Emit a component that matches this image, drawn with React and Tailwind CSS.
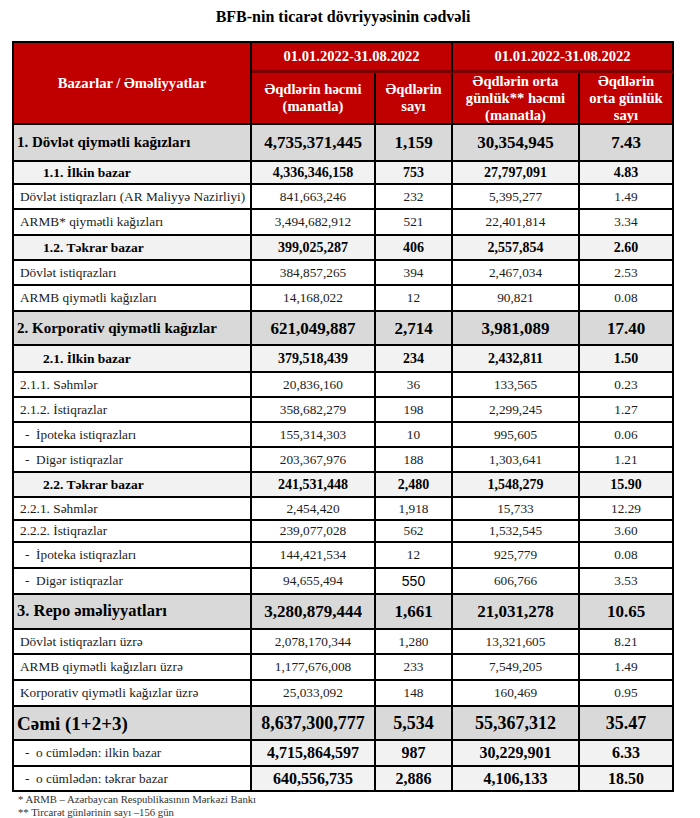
import React from "react";

const rows = [
  { t: "sec", l: "1. Dövlət qiymətli kağızları", v: ["4,735,371,445", "1,159", "30,354,945", "7.43"] },
  { t: "sub", l: "1.1. İlkin bazar", v: ["4,336,346,158", "753", "27,797,091", "4.83"] },
  { t: "reg", l: "Dövlət istiqrazları (AR Maliyyə Nazirliyi)", v: ["841,663,246", "232", "5,395,277", "1.49"] },
  { t: "reg", l: "ARMB* qiymətli kağızları", v: ["3,494,682,912", "521", "22,401,814", "3.34"] },
  { t: "sub", l: "1.2. Təkrar bazar", v: ["399,025,287", "406", "2,557,854", "2.60"] },
  { t: "reg", l: "Dövlət istiqrazları", v: ["384,857,265", "394", "2,467,034", "2.53"] },
  { t: "reg", l: "ARMB qiymətli kağızları", v: ["14,168,022", "12", "90,821", "0.08"] },
  { t: "sec", l: "2. Korporativ qiymətli kağızlar", v: ["621,049,887", "2,714", "3,981,089", "17.40"] },
  { t: "sub", l: "2.1. İlkin bazar", v: ["379,518,439", "234", "2,432,811", "1.50"] },
  { t: "reg", l: "2.1.1. Səhmlər", v: ["20,836,160", "36", "133,565", "0.23"] },
  { t: "reg", l: "2.1.2. İstiqrazlar", v: ["358,682,279", "198", "2,299,245", "1.27"] },
  { t: "dash", l: "İpoteka istiqrazları", v: ["155,314,303", "10", "995,605", "0.06"] },
  { t: "dash", l: "Digər istiqrazlar", v: ["203,367,976", "188", "1,303,641", "1.21"] },
  { t: "sub", l: "2.2. Təkrar bazar", v: ["241,531,448", "2,480", "1,548,279", "15.90"] },
  { t: "reg", l: "2.2.1. Səhmlər", v: ["2,454,420", "1,918", "15,733", "12.29"] },
  { t: "reg", l: "2.2.2. İstiqrazlar", v: ["239,077,028", "562", "1,532,545", "3.60"] },
  { t: "dash", l: "İpoteka istiqrazları", v: ["144,421,534", "12", "925,779", "0.08"] },
  { t: "dash", l: "Digər istiqrazlar", v: ["94,655,494", "550", "606,766", "3.53"], odd: true },
  { t: "sec", l: "3. Repo əməliyyatları", v: ["3,280,879,444", "1,661", "21,031,278", "10.65"], big: true },
  { t: "reg", l: "Dövlət istiqrazları üzrə", v: ["2,078,170,344", "1,280", "13,321,605", "8.21"] },
  { t: "reg", l: "ARMB qiymətli kağızları üzrə", v: ["1,177,676,008", "233", "7,549,205", "1.49"] },
  { t: "reg", l: "Korporativ qiymətli kağızlar üzrə", v: ["25,033,092", "148", "160,469", "0.95"] },
  { t: "total", l: "Cəmi (1+2+3)", v: ["8,637,300,777", "5,534", "55,367,312", "35.47"] },
  { t: "totsub", l: "o cümlədən: ilkin bazar", v: ["4,715,864,597", "987", "30,229,901", "6.33"] },
  { t: "totsub", l: "o cümlədən: təkrar bazar", v: ["640,556,735", "2,886", "4,106,133", "18.50"] },
];

const labelCls = {
  sec: "bg-[#d9d9d9] font-bold text-[15px] pl-[3px]",
  sub: "bg-[#f2f2f2] font-bold text-[13.5px] pl-[29px]",
  reg: "bg-white text-[13.3px] pl-[6px] text-[#1c1c1c]",
  dash: "bg-white text-[13.3px] pl-[11px] text-[#1c1c1c]",
  total: "bg-[#d9d9d9] font-bold text-[19px] pl-[3px]",
  totsub: "bg-white text-[13.3px] pl-[11px] text-[#1c1c1c]",
};

const valueCls = {
  sec: "bg-[#d9d9d9] font-bold text-[17px]",
  sub: "bg-[#f2f2f2] font-bold text-[14px]",
  reg: "bg-white text-[13.3px] text-[#1c1c1c]",
  dash: "bg-white text-[13.3px] text-[#1c1c1c]",
  total: "bg-[#d9d9d9] font-bold text-[18px]",
  totsub: "bg-[#f2f2f2] font-bold text-[16px]",
};

const cell = "border-r-2 border-b-2 border-black flex items-center leading-none";
const head = "bg-[#c00000] text-white font-bold text-[14.6px] flex items-center justify-center text-center leading-[17px] border-r-2 border-black";

export default function App() {
  return (
    <div className="w-[700px] h-[818px] bg-white text-black font-['Liberation_Serif',serif]">
      <div className="ml-[12px] w-[662px]">
        <div className="h-[34px] flex items-center justify-center font-bold text-[16px]">
          BFB-nin ticarət dövriyyəsinin cədvəli
        </div>
        <div className="mt-[7px] grid grid-cols-[238px_124px_77px_127px_94px] grid-rows-[30px_52px_37px_23px_25px_26px_25px_25px_26px_34px_27px_25px_25px_25px_25px_25px_23px_22px_26px_26px_35px_25px_26px_26px_34px_26px_25px] border-l-2 border-t-2 border-black">
          <div className={`${head} row-span-2 border-b-2`}>Bazarlar / Əməliyyatlar</div>
          <div className={`${head} col-span-2 border-b-[3px] border-b-[#7d0000]`}>01.01.2022-31.08.2022</div>
          <div className={`${head} col-span-2 border-b-[3px] border-b-[#7d0000]`}>01.01.2022-31.08.2022</div>
          <div className={`${head} border-b-2`}>
            Əqdlərin həcmi
            <br />
            (manatla)
          </div>
          <div className={`${head} border-b-2`}>
            Əqdlərin
            <br />
            sayı
          </div>
          <div className={`${head} border-b-2`}>
            Əqdlərin orta
            <br />
            günlük** həcmi
            <br />
            (manatla)
          </div>
          <div className={`${head} border-b-2`}>
            Əqdlərin
            <br />
            orta günlük
            <br />
            sayı
          </div>

          {rows.map((r, i) => (
            <React.Fragment key={i}>
              <div className={`${cell} ${labelCls[r.t]} whitespace-pre`}>
                {r.t === "dash" || r.t === "totsub" ? `-  ${r.l}` : r.big ? <span className="text-[16.5px]">{r.l}</span> : r.l}
              </div>
              {r.v.map((v, j) => (
                <div key={j} className={`${cell} ${valueCls[r.t]} justify-center`}>
                  {r.odd && j === 1 ? <span className="font-['Liberation_Sans',sans-serif] text-[14px] text-black">{v}</span> : v}
                </div>
              ))}
            </React.Fragment>
          ))}
        </div>
        <div className="pl-[6px] pt-[1px] text-[10.7px] leading-[13px] text-[#333]">
          <div>* ARMB – Azərbaycan Respublikasının Mərkəzi Bankı</div>
          <div>** Tircarət günlərinin sayı –156 gün</div>
        </div>
      </div>
    </div>
  );
}
